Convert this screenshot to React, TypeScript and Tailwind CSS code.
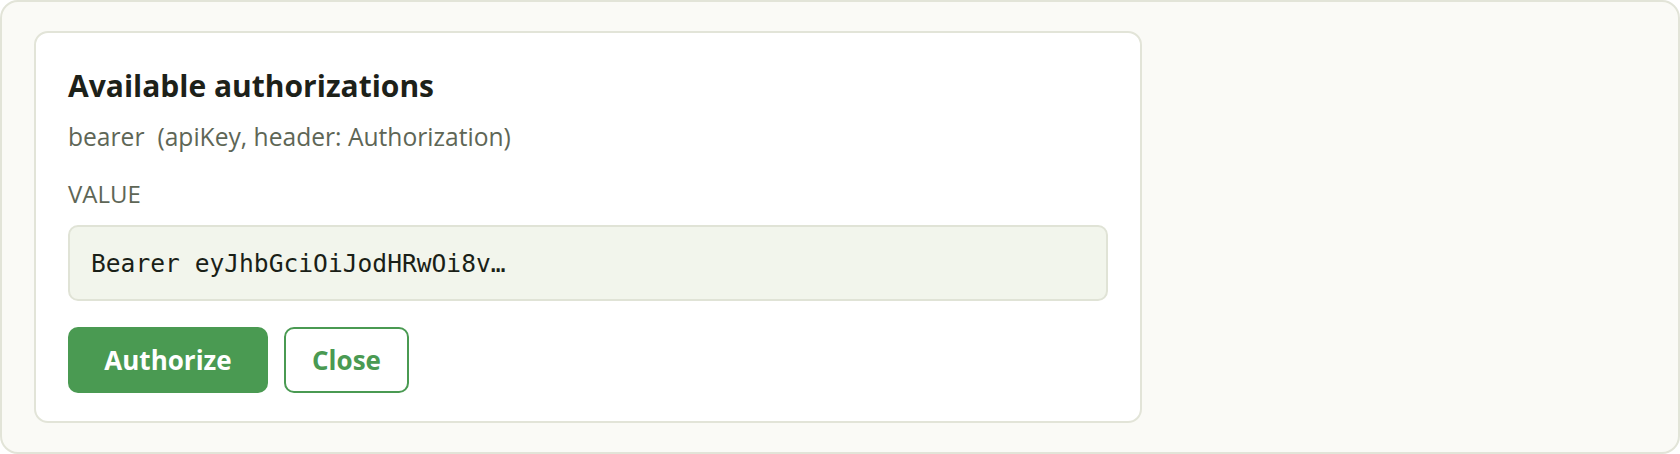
import React, { useState } from "react";

const sans = { fontFamily: '"Open Sans", "Noto Sans", sans-serif' };
const mono = { fontFamily: '"DejaVu Sans Mono", "Liberation Mono", monospace' };

interface AuthScheme {
  name: string;
  type: string;
  location: string;
  param: string;
}

const scheme: AuthScheme = {
  name: "bearer",
  type: "apiKey",
  location: "header",
  param: "Authorization",
};

const App: React.FC = () => {
  const [value, setValue] = useState("Bearer eyJhbGciOiJodHRwOi8v…");

  return (
    <div
      className="w-[1680px] h-[454px] border-2 border-[#e2e4d8] rounded-[18px] bg-[#fafaf6] px-[32px] pt-[29px] pb-[29px]"
      style={sans}
    >
      <div className="w-[1108px] bg-white border-2 border-[#e2e4d8] rounded-[14px] px-[32px] pt-[32px] pb-[28px] flex flex-col">
        <h2 className="text-[30px] leading-[42px] font-bold text-[#1d2119]">
          Available authorizations
        </h2>
        <p className="mt-[14px] text-[24.6px] leading-[32px] text-[#5e6656]">
          <span>{scheme.name}</span>
          <span className="ml-[13px]">
            ({scheme.type}, {scheme.location}: {scheme.param})
          </span>
        </p>
        <label className="mt-[25px] text-[24px] leading-[32px] text-[#5e6656] uppercase">
          Value
        </label>
        <input
          className="mt-[15px] h-[76px] w-full border-2 border-[#e0e3d6] bg-[#f2f5ec] rounded-[10px] pl-[21px] text-[24.6px] text-[#1a1f17] outline-none"
          style={mono}
          value={value}
          onChange={(e) => setValue(e.target.value)}
        />
        <div className="mt-[26px] flex gap-[16px]">
          <button className="w-[200px] h-[66px] rounded-[10px] bg-[#4a9a52] text-white text-[26px] font-bold">
            Authorize
          </button>
          <button className="w-[125px] h-[66px] rounded-[10px] border-2 border-[#4a9a52] bg-white text-[#4a9a52] text-[26px] font-bold">
            Close
          </button>
        </div>
      </div>
    </div>
  );
};

export default App;
